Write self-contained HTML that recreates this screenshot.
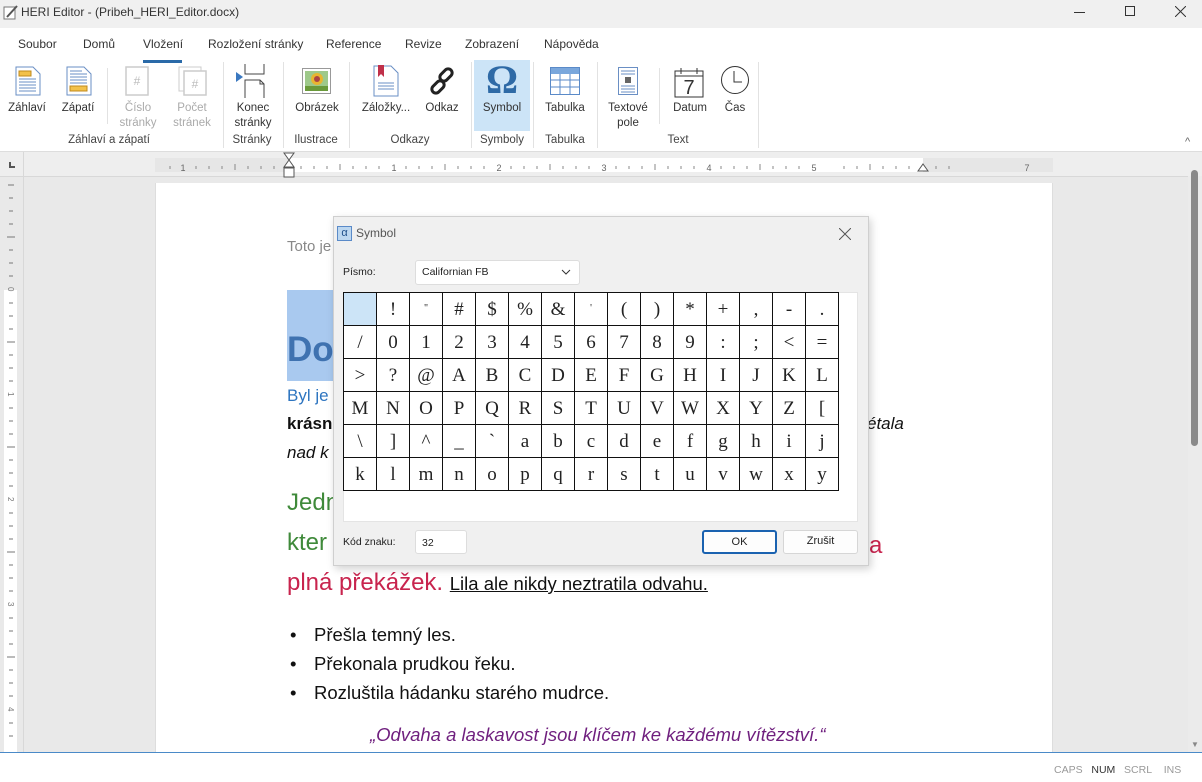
<!DOCTYPE html>
<html><head><meta charset="utf-8"><style>
*{margin:0;padding:0;box-sizing:border-box}
body{width:1202px;height:782px;overflow:hidden;position:relative;font-family:"Liberation Sans",sans-serif;background:#e9e9e9;color:#222}
.a{position:absolute;white-space:nowrap}
.tb{left:0;top:0;width:1202px;height:28px;background:#f0f0f0}
.rib{left:0;top:28px;width:1202px;height:124px;background:#fff;border-bottom:1px solid #ddd}
.tab{font-size:12px;top:37px;color:#333}
.lbl{font-size:11.5px;color:#333;text-align:center;line-height:15px;transform:translateX(-50%)}
.dis{color:#aaa}
.sep{width:1px;background:#e2e2e2}
.grp{font-size:11.5px;color:#444;top:134px;transform:translateX(-50%)}
.doc{font-family:"Liberation Sans",sans-serif}
.dlg{left:333px;top:216px;width:536px;height:350px;background:#f0f0f0;border:1px solid #cfcfcf;box-shadow:2px 3px 8px rgba(0,0,0,.18)}
.grid{border-collapse:collapse;font-family:"Liberation Serif",serif;font-size:19px;color:#222}
.grid td{width:33px;height:33px;border:1px solid #111;text-align:center;vertical-align:middle;padding:0;line-height:1}
.btn{background:#fdfdfd;border:1px solid #d6d6d6;border-radius:3px;font-size:11px;text-align:center;line-height:21px}
</style></head><body>
<div class="a tb"></div>
<svg class="a" style="left:3px;top:4px" width="16" height="16" viewBox="0 0 16 16"><rect x="1" y="3" width="11" height="12" fill="#fff" stroke="#777"/><path d="M4 13 L14 2" stroke="#555" stroke-width="2"/></svg>
<div class="a" style="left:21px;top:5px;font-size:12px;color:#333">HERI Editor - (Pribeh_HERI_Editor.docx)</div>
<div class="a" style="left:1074px;top:12px;width:11px;height:1px;background:#333"></div>
<div class="a" style="left:1125px;top:6px;width:10px;height:10px;border:1px solid #333"></div>
<svg class="a" style="left:1175px;top:6px" width="11" height="11"><path d="M0 0L11 11M11 0L0 11" stroke="#333"/></svg>

<div class="a rib"></div>
<div class="a tab" style="left:18px">Soubor</div>
<div class="a tab" style="left:83px">Domů</div>
<div class="a tab" style="left:143px">Vložení</div>
<div class="a" style="left:143px;top:60px;width:39px;height:3px;background:#2a6aa8"></div>
<div class="a tab" style="left:208px">Rozložení stránky</div>
<div class="a tab" style="left:326px">Reference</div>
<div class="a tab" style="left:405px">Revize</div>
<div class="a tab" style="left:465px">Zobrazení</div>
<div class="a tab" style="left:544px">Nápověda</div>

<div class="a" style="left:474px;top:60px;width:56px;height:71px;background:#cce4f7"></div>
<svg class="a" style="left:15px;top:66px" width="26" height="30"><path d="M1 1H18L25 8V29H1Z" fill="#fff" stroke="#6a8fc4"/><g stroke="#6a8fc4"><path d="M4 13H21M4 16H21M4 19H21M4 22H21M4 25H21"/></g><rect x="4" y="5" width="12" height="5" fill="#f2c14b" stroke="#c08a1c"/></svg>
<svg class="a" style="left:66px;top:66px" width="26" height="30"><path d="M1 1H18L25 8V29H1Z" fill="#fff" stroke="#6a8fc4"/><g stroke="#6a8fc4"><path d="M4 5H16M4 8H21M4 11H21M4 14H21M4 17H21"/></g><rect x="4" y="20" width="17" height="5" fill="#f2c14b" stroke="#c08a1c"/></svg>
<svg class="a" style="left:125px;top:66px" width="24" height="30"><rect x="1" y="1" width="22" height="28" fill="#fff" stroke="#ccc" stroke-width="1.5"/><text x="12" y="19" font-size="12" text-anchor="middle" fill="#bbb" font-family="Liberation Sans">#</text></svg>
<svg class="a" style="left:178px;top:66px" width="30" height="30"><rect x="1" y="1" width="22" height="24" fill="#fff" stroke="#ccc"/><rect x="6" y="5" width="22" height="24" fill="#fff" stroke="#ccc" stroke-width="1.5"/><text x="17" y="22" font-size="12" text-anchor="middle" fill="#bbb" font-family="Liberation Sans">#</text></svg>
<svg class="a" style="left:236px;top:64px" width="32" height="34"><path d="M9 0V10H28V0" fill="none" stroke="#444"/><path d="M9 34V16H24L28 20V34" fill="none" stroke="#444"/><path d="M24 16V20H28" fill="none" stroke="#444"/><path d="M0 8L7 13L0 18Z" fill="#3a78c0"/></svg>
<svg class="a" style="left:302px;top:68px" width="29" height="26"><rect x="0.5" y="0.5" width="28" height="25" fill="#fff" stroke="#999"/><rect x="3" y="3" width="23" height="20" fill="#9ec98a"/><circle cx="15" cy="11" r="6" fill="#e8b530"/><circle cx="15" cy="11" r="3" fill="#a44"/><rect x="3" y="18" width="23" height="5" fill="#6a9a3a"/></svg>
<svg class="a" style="left:373px;top:65px" width="26" height="32"><path d="M1 1H18L25 8V31H1Z" fill="#fff" stroke="#6a8fc4"/><path d="M5 0V12L8 9L11 12V0Z" fill="#c0304a"/><g stroke="#6a8fc4"><path d="M5 18H21M5 21H21M5 24H21"/></g></svg>
<svg class="a" style="left:428px;top:66px" width="30" height="30"><g fill="none" stroke="#222" stroke-width="3"><rect x="14" y="2" width="8" height="14" rx="4" transform="rotate(45 18 9)"/><rect x="6" y="14" width="8" height="14" rx="4" transform="rotate(45 10 21)"/></g></svg>
<div class="a" style="left:486px;top:56px;font-family:'Liberation Serif',serif;font-size:40px;font-weight:bold;color:#2e6aa6">Ω</div>
<svg class="a" style="left:550px;top:67px" width="30" height="28"><rect x="0.5" y="0.5" width="29" height="27" fill="#fff" stroke="#5a8ac8"/><rect x="1" y="1" width="28" height="6" fill="#7aa7dc"/><g stroke="#5a8ac8"><path d="M1 13H29M1 20H29M10 7V28M20 7V28"/></g></svg>
<svg class="a" style="left:618px;top:67px" width="20" height="28"><rect x="0.5" y="0.5" width="19" height="27" fill="#fff" stroke="#6a8fc4"/><g stroke="#6a8fc4"><path d="M3 4H17M3 7H17M3 19H17M3 22H17M3 25H17"/></g><rect x="7" y="10" width="6" height="6" fill="#666"/></svg>
<svg class="a" style="left:674px;top:66px" width="30" height="32"><rect x="1" y="5" width="28" height="26" fill="#fff" stroke="#333"/><path d="M1 10H29M7 2V8M23 2V8" stroke="#333"/><text x="15" y="28" font-size="20" text-anchor="middle" fill="#333" font-family="Liberation Sans">7</text></svg>
<svg class="a" style="left:720px;top:65px" width="30" height="30"><circle cx="15" cy="15" r="13.5" fill="#fff" stroke="#333"/><path d="M14 6V17H22" fill="none" stroke="#333"/></svg>

<div class="a lbl" style="left:27px;top:101px">Záhlaví</div>
<div class="a lbl" style="left:78px;top:101px">Zápatí</div>
<div class="a lbl dis" style="left:138px;top:101px">Číslo<br>stránky</div>
<div class="a lbl dis" style="left:192px;top:101px">Počet<br>stránek</div>
<div class="a lbl" style="left:253px;top:101px">Konec<br>stránky</div>
<div class="a lbl" style="left:317px;top:101px">Obrázek</div>
<div class="a lbl" style="left:386px;top:101px">Záložky...</div>
<div class="a lbl" style="left:442px;top:101px">Odkaz</div>
<div class="a lbl" style="left:502px;top:101px">Symbol</div>
<div class="a lbl" style="left:565px;top:101px">Tabulka</div>
<div class="a lbl" style="left:628px;top:101px">Textové<br>pole</div>
<div class="a lbl" style="left:690px;top:101px">Datum</div>
<div class="a lbl" style="left:735px;top:101px">Čas</div>
<div class="a grp" style="left:109px">Záhlaví a zápatí</div>
<div class="a grp" style="left:252px">Stránky</div>
<div class="a grp" style="left:316px">Ilustrace</div>
<div class="a grp" style="left:410px">Odkazy</div>
<div class="a grp" style="left:502px">Symboly</div>
<div class="a grp" style="left:565px">Tabulka</div>
<div class="a grp" style="left:678px">Text</div>
<div class="a sep" style="left:107px;top:68px;height:56px"></div>
<div class="a sep" style="left:223px;top:62px;height:86px"></div>
<div class="a sep" style="left:283px;top:62px;height:86px"></div>
<div class="a sep" style="left:349px;top:62px;height:86px"></div>
<div class="a sep" style="left:471px;top:62px;height:86px"></div>
<div class="a sep" style="left:533px;top:62px;height:86px"></div>
<div class="a sep" style="left:597px;top:62px;height:86px"></div>
<div class="a sep" style="left:659px;top:68px;height:56px"></div>
<div class="a sep" style="left:758px;top:62px;height:86px"></div>
<div class="a" style="left:1185px;top:136px;font-size:11px;color:#666">^</div>

<div class="a" style="left:0;top:152px;width:1202px;height:25px;background:#eeeeee;border-bottom:1px solid #d8d8d8"></div>
<div class="a" style="left:23px;top:152px;width:1px;height:600px;background:#d8d8d8"></div>
<div class="a" style="left:9px;top:162px;width:6px;height:6px;border-left:2px solid #555;border-bottom:2px solid #555"></div>
<div class="a" style="left:155px;top:158px;width:133px;height:14px;background:#e6e6e6"></div>
<div class="a" style="left:288px;top:158px;width:635px;height:14px;background:#fff"></div>
<div class="a" style="left:923px;top:158px;width:130px;height:14px;background:#e6e6e6"></div>
<svg class="a" style="left:155px;top:152px" width="900" height="26">
<g stroke="#888" stroke-width="1">
<path d="M15 14v3M41 14v3M54 14v3M67 14v3M80 12v6M93 14v3M106 14v3M119 14v3M146 14v3M159 14v3M172 14v3M185 12v6M198 14v3M211 14v3M224 14v3M251 14v3M264 14v3M277 14v3M290 12v6M303 14v3M316 14v3M329 14v3M356 14v3M369 14v3M382 14v3M395 12v6M408 14v3M421 14v3M434 14v3M461 14v3M474 14v3M487 14v3M500 12v6M513 14v3M526 14v3M539 14v3M566 14v3M579 14v3M592 14v3M605 12v6M618 14v3M631 14v3M644 14v3M689 14v3M702 14v3M715 12v6M728 14v3M741 14v3M754 14v3M781 14v3M794 14v3"/></g>
<g font-size="9" fill="#666" font-family="Liberation Sans" text-anchor="middle"><text x="28" y="19">1</text><text x="239" y="19">1</text><text x="344" y="19">2</text><text x="449" y="19">3</text><text x="554" y="19">4</text><text x="659" y="19">5</text><text x="872" y="19">7</text></g>
<path d="M129 1H139L134 8ZM129 15L134 8L139 15Z" fill="#fff" stroke="#555"/><rect x="129" y="16" width="10" height="9" fill="#fff" stroke="#555"/>
<path d="M763 19L768 12L773 19Z" fill="#fff" stroke="#555"/>
</svg>
<div class="a" style="left:4px;top:290px;width:13px;height:462px;background:#fff"></div>
<svg class="a" style="left:0;top:176px" width="22" height="576"><g stroke="#777"><path d="M8 9h6M9 22h4M9 35h4M9 48h4M7 61h8M9 74h4M9 87h4M9 100h4M9 127h4M9 140h4M9 153h4M7 166h8M9 179h4M9 192h4M9 205h4M9 232h4M9 245h4M9 258h4M7 271h8M9 284h4M9 297h4M9 310h4M9 337h4M9 350h4M9 363h4M7 376h8M9 389h4M9 402h4M9 415h4M9 442h4M9 455h4M9 468h4M7 481h8M9 494h4M9 507h4M9 520h4M9 547h4M9 560h4"/></g><g font-size="8" fill="#777" font-family="Liberation Sans"><text x="8" y="117" transform="rotate(90 11 114)">0</text><text x="8" y="222" transform="rotate(90 11 219)">1</text><text x="8" y="327" transform="rotate(90 11 324)">2</text><text x="8" y="432" transform="rotate(90 11 429)">3</text><text x="8" y="537" transform="rotate(90 11 534)">4</text></g></svg>

<div class="a" style="left:1188px;top:176px;width:14px;height:577px;background:#ebebeb"></div>
<div class="a" style="left:1191px;top:170px;width:7px;height:276px;background:#8a8a8a;border-radius:4px"></div>
<div class="a" style="left:1191px;top:740px;font-size:8px;color:#888">▼</div>

<div class="a" style="left:155px;top:183px;width:898px;height:570px;background:#fff;border-left:1px solid #ddd;border-right:1px solid #ddd"></div>
<div class="a doc" style="left:287px;top:238px;font-size:15px;color:#888">Toto je</div>
<div class="a" style="left:287px;top:290px;width:48px;height:91px;background:#a9c9ef"></div>
<div class="a doc" style="left:287px;top:330px;font-size:35px;font-weight:bold;color:#3f72b0">Do</div>
<div class="a doc" style="left:287px;top:386px;font-size:17px;color:#2e75c0">Byl je</div>
<div class="a doc" style="left:287px;top:414px;font-size:17px;font-weight:bold;color:#111">krásn</div>
<div class="a doc" style="left:287px;top:443px;font-size:17px;font-style:italic;color:#111">nad k</div>
<div class="a doc" style="left:867px;top:414px;font-size:17px;font-style:italic;color:#111">étala</div>
<div class="a doc" style="left:287px;top:489px;font-size:24px;color:#3f8a3a">Jedn</div>
<div class="a doc" style="left:287px;top:529px;font-size:24px;color:#3f8a3a">kter</div>
<div class="a doc" style="left:869px;top:532px;font-size:24px;color:#c8244e">a</div>
<div class="a doc" style="left:287px;top:569px;font-size:24px;color:#c8244e">plná překážek. <span style="font-size:18.5px;color:#111;text-decoration:underline">Lila ale nikdy neztratila odvahu.</span></div>
<div class="a doc" style="left:287px;top:620px;font-size:18.5px;color:#111;line-height:29px">
<div><span style="display:inline-block;width:27px;padding-left:3px">•</span>Přešla temný les.</div>
<div><span style="display:inline-block;width:27px;padding-left:3px">•</span>Překonala prudkou řeku.</div>
<div><span style="display:inline-block;width:27px;padding-left:3px">•</span>Rozluštila hádanku starého mudrce.</div></div>
<div class="a doc" style="left:370px;top:724px;font-size:18.5px;font-style:italic;color:#6f1f7e">„Odvaha a laskavost jsou klíčem ke každému vítězství.“</div>

<div class="a" style="left:0;top:752px;width:1202px;height:30px;background:#fff;border-top:1px solid #4a8ac8"></div>
<div class="a" style="left:1054px;top:764px;font-size:10.5px;color:#999">CAPS&nbsp;&nbsp;&nbsp;<span style="color:#333">NUM</span>&nbsp;&nbsp;&nbsp;SCRL&nbsp;&nbsp;&nbsp;&nbsp;INS</div>

<div class="a dlg">
 <div class="a" style="left:3px;top:9px;width:15px;height:15px;background:#bcd7f0;border:1px solid #5a8ac8;font-size:11px;line-height:13px;text-align:center;color:#1e4f8a">α</div>
 <div class="a" style="left:22px;top:9px;font-size:12px;color:#555">Symbol</div>
 <svg class="a" style="left:505px;top:11px" width="12" height="12"><path d="M0 0L12 12M12 0L0 12" stroke="#555"/></svg>
 <div class="a" style="left:9px;top:49px;font-size:10.5px;color:#222">Písmo:</div>
 <div class="a" style="left:81px;top:43px;width:165px;height:25px;background:#fff;border:1px solid #ddd;border-radius:3px"></div>
 <div class="a" style="left:88px;top:49px;font-size:10.5px;color:#222">Californian FB</div>
 <svg class="a" style="left:227px;top:52px" width="10" height="6"><path d="M1 1L5 5L9 1" fill="none" stroke="#333"/></svg>
 <div class="a" style="left:9px;top:75px;width:515px;height:230px;background:#fff;border:1px solid #e4e4e4"></div>
 <table class="a grid" style="left:9px;top:75px">
 <tr><td style="background:#cce4f7"></td><td>!</td><td style="font-size:10px">"</td><td>#</td><td>$</td><td>%</td><td>&amp;</td><td style="font-size:10px">'</td><td>(</td><td>)</td><td>*</td><td>+</td><td>,</td><td>-</td><td>.</td></tr>
 <tr><td>/</td><td>0</td><td>1</td><td>2</td><td>3</td><td>4</td><td>5</td><td>6</td><td>7</td><td>8</td><td>9</td><td>:</td><td>;</td><td>&lt;</td><td>=</td></tr>
 <tr><td>&gt;</td><td>?</td><td>@</td><td>A</td><td>B</td><td>C</td><td>D</td><td>E</td><td>F</td><td>G</td><td>H</td><td>I</td><td>J</td><td>K</td><td>L</td></tr>
 <tr><td>M</td><td>N</td><td>O</td><td>P</td><td>Q</td><td>R</td><td>S</td><td>T</td><td>U</td><td>V</td><td>W</td><td>X</td><td>Y</td><td>Z</td><td>[</td></tr>
 <tr><td>\</td><td>]</td><td>^</td><td>_</td><td>`</td><td>a</td><td>b</td><td>c</td><td>d</td><td>e</td><td>f</td><td>g</td><td>h</td><td>i</td><td>j</td></tr>
 <tr><td>k</td><td>l</td><td>m</td><td>n</td><td>o</td><td>p</td><td>q</td><td>r</td><td>s</td><td>t</td><td>u</td><td>v</td><td>w</td><td>x</td><td>y</td></tr>
 </table>
 <div class="a" style="left:9px;top:319px;font-size:10.5px;color:#222">Kód znaku:</div>
 <div class="a" style="left:81px;top:313px;width:52px;height:24px;background:#fff;border:1px solid #ddd;border-radius:3px;font-size:10.5px;padding:6px 0 0 6px">32</div>
 <div class="a btn" style="left:368px;top:313px;width:75px;height:24px;border:2px solid #1a62b0">OK</div>
 <div class="a btn" style="left:449px;top:313px;width:75px;height:24px">Zrušit</div>
</div>
</body></html>
